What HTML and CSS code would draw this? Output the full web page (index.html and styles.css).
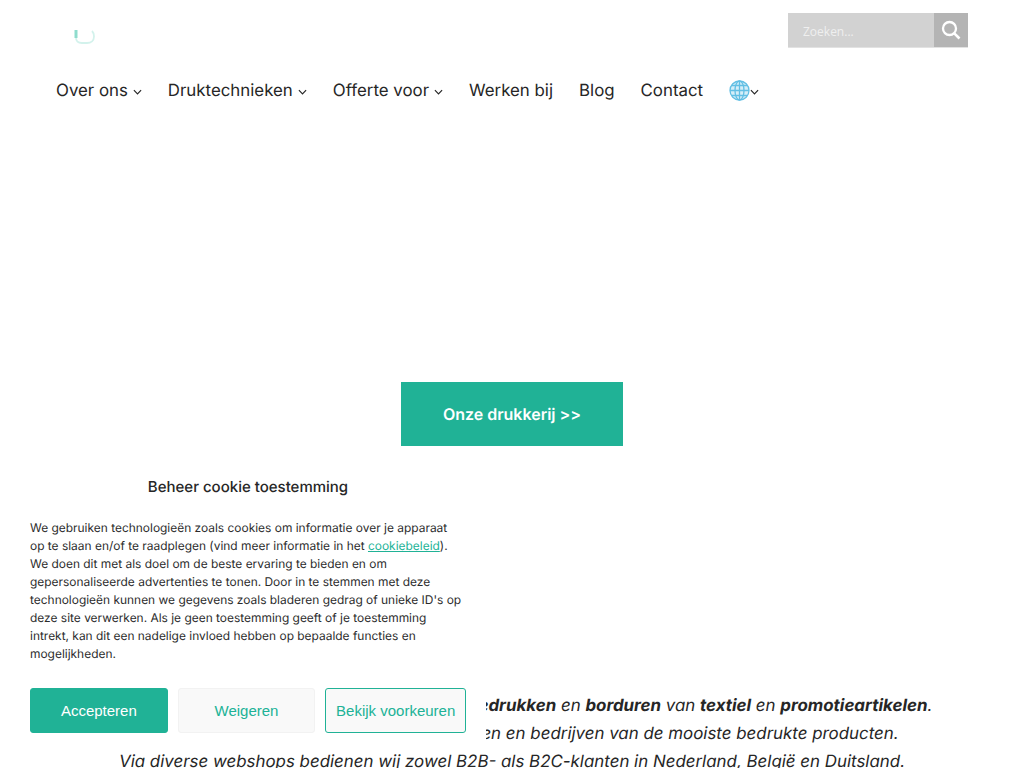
FILE: index.html
```html
<!DOCTYPE html>
<html lang="nl">
<head>
    <title>Drukkerij</title>
    <meta charset="utf-8">
    <link rel="stylesheet" href="styles.css">
</head>

<body>
<header class="header">
    <div class="topBar">
        <a class="logo" href="#">
            <svg width="22" height="16" viewBox="0 0 22 16" fill="none">
                <path d="M2 1.500V8.500C2 12 4.500 14 8 14H13C17 14 20 11.500 20 7.500C20 5 19 3 18 2" stroke="#d3f2ec" stroke-width="1.800"/>
                <path d="M2 1V9" stroke="#8fdccd" stroke-width="3"/>
            </svg>
        </a>
        <form class="search">
            <input class="searchInput" type="text" placeholder="Zoeken...">
            <button class="searchBtn" type="button" aria-label="Zoeken">
                <svg width="20" height="20" viewBox="0 0 20 20" fill="none" stroke="#fff" stroke-width="2.300">
                    <circle cx="8.500" cy="8.500" r="6.500"/>
                    <path d="M13.300 13.300L18.500 18.500" stroke-width="2.600"/>
                </svg>
            </button>
        </form>
    </div>
    <nav class="nav">
        <a href="#">Over ons<svg class="chevron" viewBox="0 0 10 6"><path d="M1 1L5 5L9 1"/></svg></a>
        <a href="#">Druktechnieken<svg class="chevron" viewBox="0 0 10 6"><path d="M1 1L5 5L9 1"/></svg></a>
        <a href="#">Offerte voor<svg class="chevron" viewBox="0 0 10 6"><path d="M1 1L5 5L9 1"/></svg></a>
        <a href="#">Werken bij</a>
        <a href="#">Blog</a>
        <a href="#">Contact</a>
        <a class="lang" href="#">
            <svg class="globe" width="21" height="21" viewBox="0 0 21 21" fill="none" stroke="#62bfe4" stroke-width="1.300">
                <circle cx="10.500" cy="10.500" r="9.500" fill="#d5eef8"/>
                <ellipse cx="10.500" cy="10.500" rx="4.500" ry="9.500"/>
                <path d="M10.500 1V20M1 10.500H20M2.500 5.500H18.500M2.500 15.500H18.500"/>
            </svg>
            <svg class="chevron chevronLang" viewBox="0 0 10 6"><path d="M1 1L5 5L9 1"/></svg>
        </a>
    </nav>
</header>

<section class="hero">
    <a class="heroBtn" href="#">Onze drukkerij &gt;&gt;</a>
</section>

<section class="intro">
    <p>Al meer dan 20 jaar zijn wij dé specialist in het <b>bedrukken</b> en <b>borduren</b> van <b>textiel</b> en <b>promotieartikelen</b>.</p>
    <p>Wij voorzien particulieren, scholen, instellingen en bedrijven van de mooiste bedrukte producten.</p>
    <p>Via diverse webshops bedienen wij zowel B2B- als B2C-klanten in Nederland, België en Duitsland.</p>
</section>

<div class="cookie">
    <h4 class="cookieTitle">Beheer cookie toestemming</h4>
    <p class="cookieText">We gebruiken technologieën zoals cookies om informatie over je apparaat op te slaan en/of te raadplegen (vind meer informatie in het <a href="#">cookiebeleid</a>). We doen dit met als doel om de beste ervaring te bieden en om gepersonaliseerde advertenties te tonen. Door in te stemmen met deze technologieën kunnen we gegevens zoals bladeren gedrag of unieke ID's op deze site verwerken. Als je geen toestemming geeft of je toestemming intrekt, kan dit een nadelige invloed hebben op bepaalde functies en mogelijkheden.</p>
    <div class="cookieBtns">
        <button class="cookieBtn accept">Accepteren</button>
        <button class="cookieBtn deny">Weigeren</button>
        <button class="cookieBtn prefs">Bekijk voorkeuren</button>
    </div>
</div>
</body>
</html>
```

FILE: styles.css
```css
html, body {height: 768px; overflow: hidden;}
body {margin: 0; background-color: white; color: #262626; font-family: Inter, "Liberation Sans", sans-serif; text-rendering: geometricPrecision;}
a {color: inherit; text-decoration: none;}

.topBar {display: flex; justify-content: space-between; padding: 13px 56px 0 74px; height: 68px; box-sizing: border-box;}
.logo {padding-top: 16px; height: 16px;}

.search {display: flex; width: 180px; height: 35px; border-bottom: 1px solid #e2e2e2; box-sizing: border-box;}
.searchInput {
    width: 146px;
    padding: 2px 15px 0;
    border: none;
    box-sizing: border-box;
    background-color: #d2d2d2;
    color: white;
    font-family: "Open Sans", sans-serif;
    font-size: 12px;
}
.searchInput::placeholder {color: #efefef; opacity: 1;}
.searchBtn {
    width: 34px;
    padding: 0;
    border: none;
    background-color: #b4b4b4;
    display: flex;
    align-items: center;
    justify-content: center;
}

.nav {display: flex; align-items: center; gap: 26px; padding: 2px 0 0 56px; height: 44px; box-sizing: border-box; font-size: 16.850px;}
.nav a {display: flex; align-items: center;}
.chevron {width: 9px; height: 6px; margin: 1px 0 0 5px; fill: none; stroke: #262626; stroke-width: 1.300;}
.globe {margin-bottom: 2px;}
.chevronLang {margin-left: 0;}

.hero {display: flex; justify-content: center; padding-top: 270px;}
.heroBtn {
    display: flex;
    align-items: center;
    justify-content: center;
    width: 222px;
    height: 64px;
    background-color: #20b296;
    color: white;
    font-size: 16px;
    font-weight: 600;
}

.intro {padding-top: 246px; text-align: center; font-size: 16.900px; font-style: italic; line-height: 28px;}
.intro p {margin: 0; white-space: nowrap;}
.intro b {font-weight: 700;}

.cookie {
    position: fixed;
    left: 0;
    bottom: 20px;
    width: 486px;
    height: 280px;
    padding: 10px 20px 0 30px;
    box-sizing: border-box;
    background-color: white;
    font-size: 11.950px;
}
.cookieTitle {margin: 0; text-align: center; font-size: 15px; font-weight: 500; line-height: 18px;}
.cookieText {margin: 23px 3px 0 0; line-height: 18px; color: #2b2b2b;}
.cookieText a {color: #20b296; text-decoration: underline;}

.cookieBtns {display: flex; gap: 10px; margin-top: 25px;}
.cookieBtn {
    width: 138px;
    height: 45px;
    padding: 0;
    border: 1px solid #f2f2f2;
    border-radius: 3px;
    background-color: #f9f9f9;
    color: #20b296;
    font-family: "Liberation Sans", sans-serif;
    font-size: 15px;
}
.accept {background-color: #20b296; border-color: #20b296; color: white;}
.prefs {width: 141px; border-color: #20b296;}
```
